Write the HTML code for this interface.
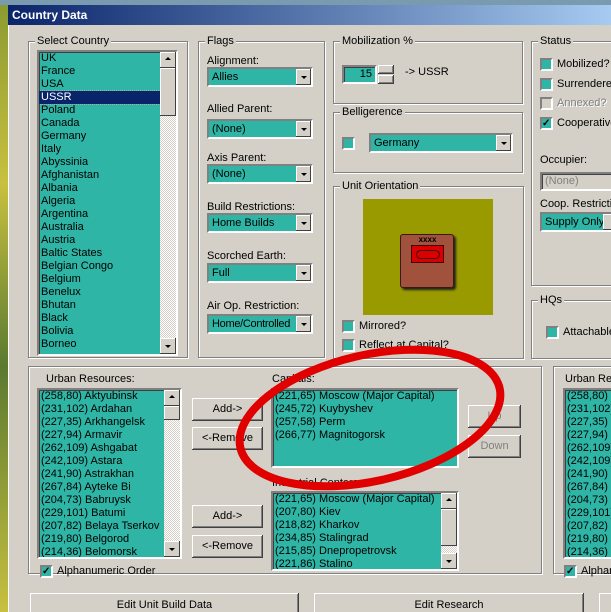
<!DOCTYPE html><html><head><meta charset="utf-8"><style>
html,body{margin:0;width:611px;height:612px;overflow:hidden}
body{background:#d4d0c8;font-family:"Liberation Sans",sans-serif;font-size:11px;color:#000;position:relative}
#clip{position:absolute;left:0;top:0;width:611px;height:612px;overflow:hidden}
.a{position:absolute;white-space:nowrap}
.map{left:0;top:0;width:8px;height:612px;background:linear-gradient(#8a9a30,#c8c040 30%,#5a7a30 60%,#c8c040)}
.maptop{left:0;top:0;width:611px;height:5px;background:#7a9ab0}
.title{left:8px;top:5px;width:603px;height:20px;background:linear-gradient(90deg,#0a246a,#a6caf0);color:#fff;font-weight:bold;font-size:12px;line-height:20px;text-indent:4px}
.grp{position:absolute;border:1px solid #808080;box-shadow:1px 1px 0 #fff,inset 1px 1px 0 #fff;white-space:nowrap}
.lg{position:absolute;top:-7px;left:6px;background:#d4d0c8;padding:0 2px;line-height:13px}
.t{background:#2fb5a5}
.sunk{border:2px solid;border-color:#808080 #fff #fff #808080;box-sizing:border-box;box-shadow:inset 1px 1px 0 #404040}
.combo{position:absolute;white-space:nowrap;overflow:hidden;height:20px;background:#2fb5a5;border:2px solid;border-color:#808080 #fff #fff #808080;box-sizing:border-box;line-height:16px;padding-left:3px}
.combo:after{content:"";position:absolute;right:0;top:0;width:15px;height:16px;background:#d4d0c8;box-shadow:inset -1px -1px 0 #404040,inset 1px 1px 0 #fff}
.dd{position:absolute;right:4px;top:7px;width:0;height:0;border:3px solid transparent;border-top:3px solid #000;border-bottom:0;z-index:2}
.btn{position:absolute;background:#d4d0c8;box-shadow:inset -1px -1px 0 #404040,inset 1px 1px 0 #fff,inset -2px -2px 0 #808080;text-align:center;white-space:nowrap}
.cb{position:absolute;width:13px;height:13px;background:#2fb5a5;box-sizing:border-box;border:2px solid;border-color:#808080 #fff #fff #808080}
.list{position:absolute;line-height:13px;overflow:hidden;padding-left:2px;white-space:nowrap}
.sb{position:absolute;width:16px;background:repeating-conic-gradient(#fff 0 25%,#d4d0c8 0 50%) 0 0/2px 2px}
.arr{position:absolute;width:16px;height:16px;background:#d4d0c8;box-shadow:inset -1px -1px 0 #404040,inset 1px 1px 0 #fff}
.up:before,.dn:before{content:"";position:absolute;left:5px;border:3px solid transparent}
.up:before{top:5px;border-bottom:3px solid #000;border-top:0}
.dn:before{top:7px;border-top:3px solid #000;border-bottom:0}
.thumb{position:absolute;width:16px;background:#d4d0c8;box-shadow:inset -1px -1px 0 #404040,inset 1px 1px 0 #fff}
</style></head><body><div id="clip">
<div class="a map"></div><div class="a maptop"></div>
<div class="a" style="left:8px;top:25px;width:603px;height:587px;background:#d4d0c8;box-shadow:inset 1px 0 0 #fff"></div>
<div class="a title">Country Data</div>

<div class="grp" style="left:28px;top:41px;width:158px;height:315px"><span class="lg">Select Country</span></div>
<div class="a sunk t" style="left:37px;top:50px;width:141px;height:306px"></div>
<div class="list" style="left:39px;top:52px;width:121px;height:302px">UK<br>France<br>USA<br><div style="background:#0a246a;color:#fff;margin-left:-2px;padding-left:2px;outline:1px dotted #aaa">USSR</div>Poland<br>Canada<br>Germany<br>Italy<br>Abyssinia<br>Afghanistan<br>Albania<br>Algeria<br>Argentina<br>Australia<br>Austria<br>Baltic States<br>Belgian Congo<br>Belgium<br>Benelux<br>Bhutan<br>Black<br>Bolivia<br>Borneo</div>
<div class="sb" style="left:160px;top:52px;height:302px"></div>
<div class="arr up" style="left:160px;top:52px"></div>
<div class="thumb" style="left:160px;top:68px;height:48px"></div>
<div class="arr dn" style="left:160px;top:338px"></div>

<div class="grp" style="left:198px;top:41px;width:125px;height:315px"><span class="lg">Flags</span></div>
<div class="a" style="left:207px;top:55px">Alignment:</div>
<div class="combo" style="left:207px;top:67px;width:106px">Allies<i class="dd"></i></div>
<div class="a" style="left:207px;top:103px">Allied Parent:</div>
<div class="combo" style="left:207px;top:119px;width:106px">(None)<i class="dd"></i></div>
<div class="a" style="left:207px;top:152px">Axis Parent:</div>
<div class="combo" style="left:207px;top:164px;width:106px">(None)<i class="dd"></i></div>
<div class="a" style="left:207px;top:201px">Build Restrictions:</div>
<div class="combo" style="left:207px;top:213px;width:106px">Home Builds<i class="dd"></i></div>
<div class="a" style="left:207px;top:250px">Scorched Earth:</div>
<div class="combo" style="left:207px;top:263px;width:106px">Full<i class="dd"></i></div>
<div class="a" style="left:207px;top:300px">Air Op. Restriction:</div>
<div class="combo" style="left:207px;top:314px;width:106px;letter-spacing:-0.3px">Home/Controlled<i class="dd"></i></div>

<div class="grp" style="left:333px;top:41px;width:188px;height:61px"><span class="lg">Mobilization %</span></div>
<div class="a sunk t" style="left:342px;top:65px;width:35px;height:19px;text-align:right;padding-right:3px;line-height:15px">15</div>
<div class="btn" style="left:378px;top:65px;width:16px;height:9px"></div><div class="btn" style="left:378px;top:75px;width:16px;height:9px"></div>
<div class="a" style="left:405px;top:66px">-&gt; USSR</div>

<div class="grp" style="left:333px;top:112px;width:188px;height:59px"><span class="lg">Belligerence</span></div>
<div class="cb" style="left:342px;top:137px"></div>
<div class="combo" style="left:369px;top:133px;width:144px">Germany<i class="dd"></i></div>

<div class="grp" style="left:333px;top:186px;width:189px;height:171px"><span class="lg">Unit Orientation</span></div>
<div class="a" style="left:363px;top:199px;width:130px;height:116px;background:#999900"></div>
<div class="a" style="left:400px;top:234px;width:54px;height:54px;background:#a0523c;border-radius:3px;box-shadow:2px 2px 2px #222,inset 0 0 0 1px #3a1a10"></div>
<div class="a" style="left:411px;top:235px;width:33px;text-align:center;font-size:8px;font-weight:bold;line-height:10px">xxxx</div>
<div class="a" style="left:411px;top:245px;width:33px;height:18px;background:#d80000;box-shadow:inset 0 0 0 1px #400"></div>
<div class="a" style="left:416px;top:250px;width:22px;height:7px;border:1px solid #400;border-radius:5px"></div>
<div class="cb" style="left:342px;top:320px"></div><div class="a" style="left:359px;top:320px">Mirrored?</div>
<div class="cb" style="left:342px;top:339px"></div><div class="a" style="left:359px;top:339px">Reflect at Capital?</div>

<div class="grp" style="left:531px;top:41px;width:90px;height:243px"><span class="lg">Status</span></div>
<div class="cb" style="left:540px;top:58px"></div><div class="a" style="left:557px;top:58px">Mobilized?</div>
<div class="cb" style="left:540px;top:78px"></div><div class="a" style="left:557px;top:78px">Surrendered?</div>
<div class="cb" style="left:540px;top:97px;background:#d4d0c8"></div><div class="a" style="left:557px;top:97px;color:#808080;text-shadow:1px 1px #fff">Annexed?</div>
<div class="cb" style="left:540px;top:117px;font-size:10px;line-height:9px;font-weight:bold">✓</div><div class="a" style="left:557px;top:117px">Cooperative?</div>
<div class="a" style="left:540px;top:154px">Occupier:</div>
<div class="a sunk" style="left:540px;top:172px;width:80px;height:19px;color:#808080;padding-left:3px;line-height:15px">(None)</div>
<div class="a" style="left:540px;top:198px">Coop. Restriction:</div>
<div class="combo" style="left:540px;top:212px;width:80px">Supply Only</div>

<div class="grp" style="left:531px;top:300px;width:90px;height:57px"><span class="lg">HQs</span></div>
<div class="cb" style="left:546px;top:326px"></div><div class="a" style="left:563px;top:326px">Attachable?</div>

<div class="grp" style="left:28px;top:366px;width:512px;height:206px"></div>
<div class="a" style="left:46px;top:373px">Urban Resources:</div>
<div class="a sunk t" style="left:37px;top:388px;width:145px;height:171px"></div>
<div class="list" style="left:39px;top:390px;width:124px;height:167px">(258,80) Aktyubinsk<br>(231,102) Ardahan<br>(227,35) Arkhangelsk<br>(227,94) Armavir<br>(262,109) Ashgabat<br>(242,109) Astara<br>(241,90) Astrakhan<br>(267,84) Ayteke Bi<br>(204,73) Babruysk<br>(229,101) Batumi<br>(207,82) Belaya Tserkov<br>(219,80) Belgorod<br>(214,36) Belomorsk</div>
<div class="sb" style="left:164px;top:390px;height:167px"></div>
<div class="arr up" style="left:164px;top:390px"></div>
<div class="thumb" style="left:164px;top:406px;height:14px"></div>
<div class="arr dn" style="left:164px;top:541px"></div>
<div class="cb" style="left:40px;top:565px;font-size:10px;line-height:9px;font-weight:bold">✓</div><div class="a" style="left:57px;top:565px">Alphanumeric Order</div>

<div class="btn" style="left:192px;top:398px;width:71px;height:23px;line-height:23px">Add-&gt;</div>
<div class="btn" style="left:192px;top:427px;width:71px;height:23px;line-height:23px">&lt;-Remove</div>
<div class="btn" style="left:192px;top:505px;width:71px;height:23px;line-height:23px">Add-&gt;</div>
<div class="btn" style="left:192px;top:535px;width:71px;height:23px;line-height:23px">&lt;-Remove</div>

<div class="a" style="left:272px;top:373px">Capitals:</div>
<div class="a sunk t" style="left:271px;top:388px;width:188px;height:80px"></div>
<div class="list" style="left:273px;top:390px;width:180px;height:75px">(221,65) Moscow (Major Capital)<br>(245,72) Kuybyshev<br>(257,58) Perm<br>(266,77) Magnitogorsk</div>
<div class="btn" style="left:468px;top:405px;width:53px;height:23px;line-height:23px;color:#808080">Up</div>
<div class="btn" style="left:468px;top:435px;width:53px;height:23px;line-height:23px;color:#808080">Down</div>

<div class="a" style="left:272px;top:477px">Industrial Centers:</div>
<div class="a sunk t" style="left:271px;top:491px;width:188px;height:80px"></div>
<div class="list" style="left:273px;top:493px;width:164px;height:76px">(221,65) Moscow (Major Capital)<br>(207,80) Kiev<br>(218,82) Kharkov<br>(234,85) Stalingrad<br>(215,85) Dnepropetrovsk<br>(221,86) Stalino</div>
<div class="sb" style="left:441px;top:493px;height:76px"></div>
<div class="arr up" style="left:441px;top:493px"></div>
<div class="thumb" style="left:441px;top:509px;height:37px"></div>
<div class="arr dn" style="left:441px;top:553px"></div>

<div class="grp" style="left:553px;top:366px;width:70px;height:206px"></div>
<div class="a" style="left:565px;top:373px">Urban Resources:</div>
<div class="a sunk t" style="left:563px;top:388px;width:60px;height:171px"></div>
<div class="list" style="left:565px;top:390px;width:46px;height:167px">(258,80)<br>(231,102)<br>(227,35)<br>(227,94)<br>(262,109)<br>(242,109)<br>(241,90)<br>(267,84)<br>(204,73)<br>(229,101)<br>(207,82)<br>(219,80)<br>(214,36)</div>
<div class="cb" style="left:564px;top:565px;font-size:10px;line-height:9px;font-weight:bold">✓</div><div class="a" style="left:581px;top:565px">Alphanumeric</div>

<div class="btn" style="left:30px;top:593px;width:269px;height:24px;line-height:24px">Edit Unit Build Data</div>
<div class="btn" style="left:314px;top:593px;width:270px;height:24px;line-height:24px">Edit Research</div>
<div class="btn" style="left:599px;top:593px;width:30px;height:24px"></div>

<svg class="a" style="left:0;top:0" width="611" height="612"><ellipse cx="370" cy="418" rx="133" ry="63" transform="rotate(-13 370 418)" fill="none" stroke="#e00000" stroke-width="8"/></svg>
</div></body></html>
